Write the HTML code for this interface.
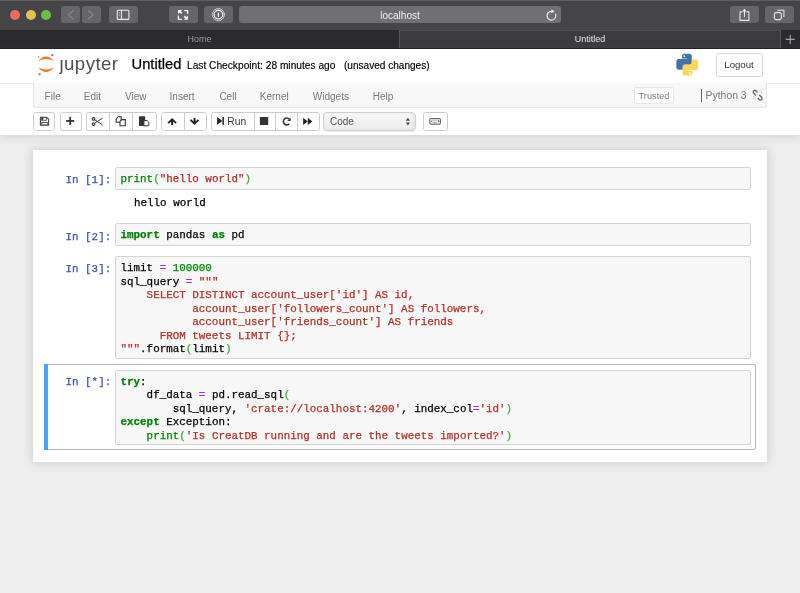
<!DOCTYPE html>
<html><head><meta charset="utf-8">
<style>
*{box-sizing:border-box;margin:0;padding:0}
html,body{width:800px;height:593px;overflow:hidden;background:#eeeeee;font-family:"Liberation Sans",sans-serif;position:relative}
body{will-change:transform}
.abs{position:absolute}
/* safari chrome */
#chrome{position:absolute;left:0;top:0;width:800px;height:30px;background:#454447}
#chrome .topline{position:absolute;left:0;top:0;width:800px;height:1px;background:#5f5e61}
.light{position:absolute;top:9.75px;width:10px;height:10px;border-radius:50%}
.sbtn{position:absolute;top:6px;height:17px;background:#666568;border-radius:3px}
#tabs{position:absolute;left:0;top:30px;width:800px;height:19px;background:#2b2a2d}
#tabs .t1{position:absolute;left:0;top:0;width:399px;height:18px;background:#2b2a2d}
#tabs .t2{position:absolute;left:400px;top:0;width:380px;height:18px;background:#3c3b3e}
#tabs .sep{position:absolute;top:0;width:1px;height:18px;background:#58575a}
#tabs .bot{position:absolute;left:0;top:18px;width:800px;height:1px;background:#1d1c1e}
.tabtitle{position:absolute;top:3px;font-size:9px;line-height:12px;text-align:center}
/* jupyter header */
#header{position:absolute;left:0;top:49px;width:800px;height:86px;background:#fff;box-shadow:0 0 9px 1px rgba(87,87,87,0.2)}
#hbar{position:absolute;left:0;top:34px;width:800px;height:1px;background:#e7e7e7}
#menubar{position:absolute;left:33px;top:34px;width:734px;height:25px;background:#f8f8f8;border:1px solid #e7e7e7;border-top:none;border-radius:0 0 3px 3px}
.menu{position:absolute;top:7.8px;font-size:10px;color:#777;line-height:12px}
.btn{position:absolute;top:63px;height:18.5px;background:#fff;border:1px solid #ccc;border-radius:2.5px}
.grp{position:absolute;top:0;height:100%;border-left:1px solid #ccc}
/* notebook */
#nb{position:absolute;left:33px;top:150px;width:734px;height:312px;background:#fff;box-shadow:0 0 9px 1px rgba(87,87,87,0.2)}
.prompt{position:absolute;-webkit-text-stroke:0.25px currentColor;font-family:"Liberation Mono",monospace;font-size:10.88px;color:#3f4fae;white-space:pre;line-height:13.4px}
.input{position:absolute;left:82px;width:636px;background:#f7f7f7;border:1px solid #d4d4d4;border-radius:2px}
.code{position:absolute;left:4.5px;top:5.2px;-webkit-text-stroke:0.25px currentColor;font-family:"Liberation Mono",monospace;font-size:10.88px;line-height:13.45px;white-space:pre;color:#000}
.kw{color:#008000;font-weight:bold}
.bi{color:#008000}
.st{color:#b3302a}
.op{color:#AA22FF}
.nu{color:#080}
.br{color:#3fae3f}
</style></head><body>
<div id="chrome">
  <div class="topline"></div>
  <div class="light" style="left:9.8px;background:#ec6a5e"></div>
  <div class="light" style="left:25.5px;background:#e2c04e"></div>
  <div class="light" style="left:41.1px;background:#6cc04a"></div>
  <div class="sbtn" style="left:61px;width:19px"></div>
  <div class="sbtn" style="left:81.5px;width:19px"></div>
  <div class="sbtn" style="left:109px;width:28.5px"></div>
  <div class="sbtn" style="left:169px;width:28.5px"></div>
  <div class="sbtn" style="left:204px;width:28.5px"></div>
  <div class="sbtn" style="left:239px;width:322px;background:#706f72"></div>
  <div class="sbtn" style="left:729.5px;width:29px"></div>
  <div class="sbtn" style="left:765px;width:29px"></div>
  <div class="abs" style="left:239px;top:9px;width:322px;text-align:center;font-size:10px;line-height:13px;color:#f0f0f0">localhost</div>
</div>
<div id="tabs">
  <div class="t1"></div>
  <div class="t2"></div>
  <div class="abs" style="left:399px;top:0;width:382px;height:1px;background:#4b4a4d"></div>
  <div class="sep" style="left:399px"></div>
  <div class="sep" style="left:780px"></div>
  <div class="tabtitle" style="left:0;width:399px;color:#9d9c9f">Home</div>
  <div class="tabtitle" style="left:400px;width:380px;color:#e8e8e8">Untitled</div>
  <div class="bot"></div>
</div>

<div id="header">
  <div class="abs" style="left:59.5px;top:3.5px;font-size:18.6px;letter-spacing:0.45px;color:#4f4f4f;line-height:22px">&#x237;upyter</div>
  <div class="abs" style="left:131.5px;top:6px;-webkit-text-stroke:0.25px #000;font-size:14.75px;line-height:18px;color:#000">Untitled</div>
  <div class="abs" style="left:187px;top:10px;-webkit-text-stroke:0.15px #000;font-size:10.2px;line-height:13px;color:#000">Last Checkpoint: 28 minutes ago</div>
  <div class="abs" style="left:344px;top:10px;-webkit-text-stroke:0.15px #000;font-size:10.07px;line-height:13px;color:#000">(unsaved changes)</div>
  <div class="abs" style="left:715.5px;top:4px;width:47px;height:23.5px;border:1px solid #d6d6d6;border-radius:2.5px;font-size:9.6px;line-height:21.5px;text-align:center;color:#333">Logout</div>
  <div id="hbar"></div>
  <div id="menubar">
    <div class="menu" style="left:10.6px">File</div>
    <div class="menu" style="left:49.8px">Edit</div>
    <div class="menu" style="left:91px">View</div>
    <div class="menu" style="left:135.6px">Insert</div>
    <div class="menu" style="left:185.4px">Cell</div>
    <div class="menu" style="left:225.8px">Kernel</div>
    <div class="menu" style="left:278.8px">Widgets</div>
    <div class="menu" style="left:338.8px">Help</div>
    <div class="abs" style="left:600px;top:4px;width:40px;height:17px;background:#fff;border:1px solid #e7e7e7;border-radius:2px;font-size:9.2px;line-height:17px;text-align:center;color:#777">Trusted</div>
    <div class="abs" style="left:667px;top:6.2px;width:1px;height:13.3px;background:#666"></div>
    <div class="menu" style="left:671.6px;top:7.4px;color:#777;font-size:10.4px">Python 3</div>
  </div>
  <div class="btn" style="left:33.2px;width:22.3px"></div>
  <div class="btn" style="left:59.5px;width:22px"></div>
  <div class="btn" style="left:85.5px;width:71px"><div class="grp" style="left:22.6px"></div><div class="grp" style="left:45.5px"></div></div>
  <div class="btn" style="left:160.5px;width:46px"><div class="grp" style="left:22px"></div></div>
  <div class="btn" style="left:210.5px;width:109px"><div class="grp" style="left:42px"></div><div class="grp" style="left:63.5px"></div><div class="grp" style="left:85px"></div></div>
  <div class="btn" style="left:323.2px;width:92.6px;background:linear-gradient(#f8f8f8,#ececec);border-color:#d0d0d0;border-radius:4px;box-shadow:inset -3px 0 3px rgba(0,0,0,0.05),0 1px 1px rgba(0,0,0,0.08)"></div>
  <div class="abs" style="left:330px;top:66px;font-size:10px;line-height:13px;color:#555">Code</div>
  <div class="btn" style="left:423px;width:24.5px"></div>
  <div class="abs" style="left:227.3px;top:66px;font-size:10.3px;line-height:13px;color:#333">Run</div>
</div>

<div id="nb">
  <div class="prompt" style="left:32.5px;top:24px">In [1]:</div>
  <div class="input" style="top:17.3px;height:22.4px"><div class="code"><span class="bi">print</span><span class="br">(</span><span class="st">"hello world"</span><span class="br">)</span></div></div>
  <div class="code" style="left:101px;top:46.7px">hello world</div>
  <div class="prompt" style="left:32.5px;top:80.5px">In [2]:</div>
  <div class="input" style="top:73.3px;height:23.2px"><div class="code"><span class="kw">import</span> pandas <span class="kw">as</span> pd</div></div>
  <div class="prompt" style="left:32.5px;top:113px">In [3]:</div>
  <div class="input" style="top:106.3px;height:102.6px"><div class="code">limit <span class="op">=</span> <span class="nu">100000</span>
sql_query <span class="op">=</span> <span class="st">"""
    SELECT DISTINCT account_user['id'] AS id,
           account_user['followers_count'] AS followers,
           account_user['friends_count'] AS friends
      FROM tweets LIMIT {};
"""</span>.format<span class="br">(</span>limit<span class="br">)</span></div></div>
  <div class="abs" style="left:11.5px;top:214.2px;width:711px;height:85.5px;border:1px solid #b5b5b5;border-radius:2px"></div>
  <div class="abs" style="left:11.3px;top:214.2px;width:4px;height:85.5px;background:#42A5F5"></div>
  <div class="prompt" style="left:32.5px;top:226px">In [*]:</div>
  <div class="input" style="top:219.5px;height:75.6px"><div class="code"><span class="kw">try</span>:
    df_data <span class="op">=</span> pd.read_sql<span class="br">(</span>
        sql_query, <span class="st">'crate://localhost:4200'</span>, index_col<span class="op">=</span><span class="st">'id'</span><span class="br">)</span>
<span class="kw">except</span> Exception:
    <span class="bi">print</span><span class="br">(</span><span class="st">'Is CreatDB running and are the tweets imported?'</span><span class="br">)</span></div></div>
</div>

<svg id="ov" width="800" height="593" viewBox="0 0 800 593" style="position:absolute;left:0;top:0;pointer-events:none">
 <g fill="none" stroke-linecap="round" stroke-linejoin="round">
  <polyline points="73,10.8 68.4,14.8 73,18.8" stroke="#8e8d90" stroke-width="1.1"/>
  <polyline points="88.6,10.8 93.2,14.8 88.6,18.8" stroke="#8e8d90" stroke-width="1.1"/>
  <rect x="117.3" y="10.3" width="11.6" height="9.1" rx="1" stroke="#ececec" stroke-width="1.1"/>
  <line x1="121.4" y1="10.3" x2="121.4" y2="19.4" stroke="#ececec" stroke-width="1"/>
  <path d="M184.2,10.6 H187.6 V14" stroke="#f2f2f2" stroke-width="1.3" stroke-linecap="butt"/>
  <path d="M178.4,15.6 V19.3 H182" stroke="#f2f2f2" stroke-width="1.3" stroke-linecap="butt"/>
  <circle cx="218.4" cy="14.6" r="6" stroke="#dedede" stroke-width="0.9"/>
  <circle cx="218.4" cy="14.6" r="4.3" stroke="#f4f4f4" stroke-width="1.2"/>
  <path d="M551.5,11.3 A4.4,4.4 0 1 0 555.6,14.2" stroke="#e8e8e8" stroke-width="1.2"/>
  <path d="M742,11.9 H740 V20.4 H748.9 V11.9 H746.9" stroke="#e6e6e6" stroke-width="1.1"/>
  <line x1="744.45" y1="9.6" x2="744.45" y2="16.6" stroke="#e6e6e6" stroke-width="1.1"/>
  <path d="M777.2,10.2 H783.9 V17" stroke="#e6e6e6" stroke-width="1.1" stroke-linecap="butt"/>
  <rect x="774.4" y="12.6" width="6.9" height="7" rx="1.6" stroke="#e6e6e6" stroke-width="1.1"/>
  <path d="M785.7,39.4 H794.7 M790.2,34.9 V43.9" stroke="#a4a3a6" stroke-width="1.1" stroke-linecap="butt"/>
 </g>
 <g fill="#f2f2f2">
  <polygon points="178,10 182.2,10 180.9,11.3 182.4,12.8 181.1,14.1 179.6,12.6 178,14.2"/>
  <polygon points="188,19.7 183.8,19.7 185.1,18.4 183.6,16.9 184.9,15.6 186.4,17.1 188,15.5"/>
  <rect x="217.75" y="12.6" width="1.3" height="4.3" rx="0.5"/>
  <polygon points="551.3,9.4 554.6,11.3 551.3,13.3"/>
  <polygon points="742.2,11.4 744.45,8.7 746.7,11.4"/>
  <circle cx="119.3" cy="12.3" r="0.45"/><circle cx="119.3" cy="14" r="0.45"/><circle cx="119.3" cy="15.7" r="0.45"/>
 </g>
 <!-- jupyter logo -->
 <g>
  <path d="M38.2,60.9 Q46,52 53.8,60.9 Q46,57.2 38.2,60.9 Z" fill="#f37726"/>
  <path d="M38.2,67.6 Q46,76.4 53.8,67.6 Q46,71.3 38.2,67.6 Z" fill="#f37726"/>
  <circle cx="52.3" cy="55.2" r="1.1" fill="#767677"/>
  <circle cx="38.7" cy="56.9" r="0.7" fill="#616262"/>
  <circle cx="39.5" cy="74.2" r="1.2" fill="#989798"/>
 </g>
 <!-- python logo -->
 <g transform="translate(676.3,53.8)">
  <path d="M8,0 H13 Q15.5,0 15.5,2.5 V9 Q15.5,11 13.5,11 H8.5 Q6.5,11 6.5,13 V16 H2.5 Q0,16 0,13 V8 Q0,5.3 2.7,5.3 H10.5 V4.6 H5.6 V2.5 Q5.6,0 8,0 Z" fill="#4272a8"/>
  <path d="M13.8,21.8 H8.8 Q6.3,21.8 6.3,19.3 V12.8 Q6.3,10.8 8.3,10.8 H13.3 Q15.3,10.8 15.3,8.8 V5.8 H19.3 Q21.8,5.8 21.8,8.8 V13.8 Q21.8,16.5 19.1,16.5 H11.3 V17.2 H16.2 V19.3 Q16.2,21.8 13.8,21.8 Z" fill="#fcd65a"/>
  <circle cx="8" cy="2.3" r="0.85" fill="#fff"/>
  <circle cx="13.8" cy="19.5" r="0.85" fill="#fff"/>
 </g>
 <!-- toolbar icons -->
 <g fill="#333">
  <path d="M40.4,117.3 H46.6 L48.6,119.3 V125.3 H40.4 Z" fill="none" stroke="#444" stroke-width="1.1"/><rect x="41.4" y="117.4" width="4.9" height="2.9" fill="none" stroke="#555" stroke-width="0.9"/><rect x="42" y="117.5" width="1.3" height="2.3" fill="#222"/><rect x="41.7" y="122.5" width="5.6" height="2.4" fill="#fff" stroke="#555" stroke-width="1"/>
  <rect x="66.1" y="120.05" width="8.1" height="1.8"/>
  <rect x="69.25" y="116.9" width="1.8" height="7.9"/>
  <path d="M172.1,118 L167.5,122.5 L168.8,123.8 L171.1,121.6 V125.1 H173.1 V121.6 L175.4,123.8 L176.7,122.5 Z" fill="#222"/>
  <path d="M194.5,125.1 L189.9,120.6 L191.2,119.3 L193.5,121.5 V118 H195.5 V121.5 L197.8,119.3 L199.1,120.6 Z" fill="#222"/>
  <polygon points="217.1,117 222.4,120.9 217.1,124.8" fill="#222"/>
  <rect x="222.4" y="117" width="1.5" height="7.8" fill="#222"/>
  <rect x="259.9" y="116.9" width="8.3" height="8.2" rx="0.6"/>
  <polygon points="303.2,117.8 307.8,121.45 303.2,125.1" fill="#222"/>
  <polygon points="307.8,117.8 312.4,121.45 307.8,125.1" fill="#222"/>
  <polygon points="405.8,120.7 407.9,117.8 410,120.7" fill="#444"/>
  <polygon points="405.8,122.4 410,122.4 407.9,125.4" fill="#444"/>
  <rect x="139" y="116.3" width="6.2" height="9.8" rx="0.6"/>
  <rect x="429.7" y="118.5" width="10.8" height="5.8" rx="1.2" fill="#e4e4e4" stroke="#6a6a6a" stroke-width="1.1"/><rect x="430.9" y="120.8" width="1.1" height="1.1" fill="#777"/><rect x="438.1" y="120.3" width="1.2" height="1.8" fill="#666"/><rect x="433.3" y="122.4" width="3.6" height="1.2" fill="#999"/><rect x="432.6" y="119.6" width="5" height="1" fill="#bbb"/>
 </g>
 <g fill="#fff">
 </g>
 <g fill="none" stroke="#333">
  <rect x="42" y="117.4" width="4.8" height="3" fill="none" stroke-width="0"/>
  <circle cx="93.5" cy="118.9" r="1.3" stroke-width="1.1"/>
  <circle cx="93.5" cy="124.1" r="1.3" stroke-width="1.1"/>
  <path d="M94.6,119.7 L102.6,124.9 M94.6,123.3 L102.6,118.1" stroke-width="1"/>
  <path d="M116.2,118.8 L118.3,116.7 H121.2 V122.3 H116.2 Z" stroke-width="1.1" fill="#fff"/>
  <path d="M120,121.3 L122,119.6 H125.3 V125.7 H120 Z" stroke-width="1.1" fill="#fff"/>
  <path d="M143.9,120.5 H147.1 L148.8,122.2 V125.8 H143.9 Z" stroke-width="1" fill="#fff"/>
  <path d="M289.3,119.2 A3.4,3.4 0 1 0 289.3,123.7" stroke-width="1.6"/>
  <path d="M757.6,92.4 L755.9,90.7 Q754.8,89.8 753.7,90.9 Q752.7,92 753.7,93.1 L756,95.4 M757.8,98 L759.5,99.7 Q760.6,100.6 761.7,99.5 Q762.7,98.4 761.7,97.3 L759.4,95" stroke="#666" stroke-width="1.35"/>
  <path d="M759.6,90.8 L760.1,89.6 M760.6,91.7 L761.9,91.1 M761,92.8 L762.3,92.9 M755.8,98.6 L755.3,99.8 M754.8,97.7 L753.5,98.3 M754.4,96.6 L753.1,96.5" stroke="#bbb" stroke-width="0.8"/>
 </g>
 <polygon points="290.7,117.6 290.7,120.9 287.5,120.9" fill="#333"/>
</svg>
</body></html>
